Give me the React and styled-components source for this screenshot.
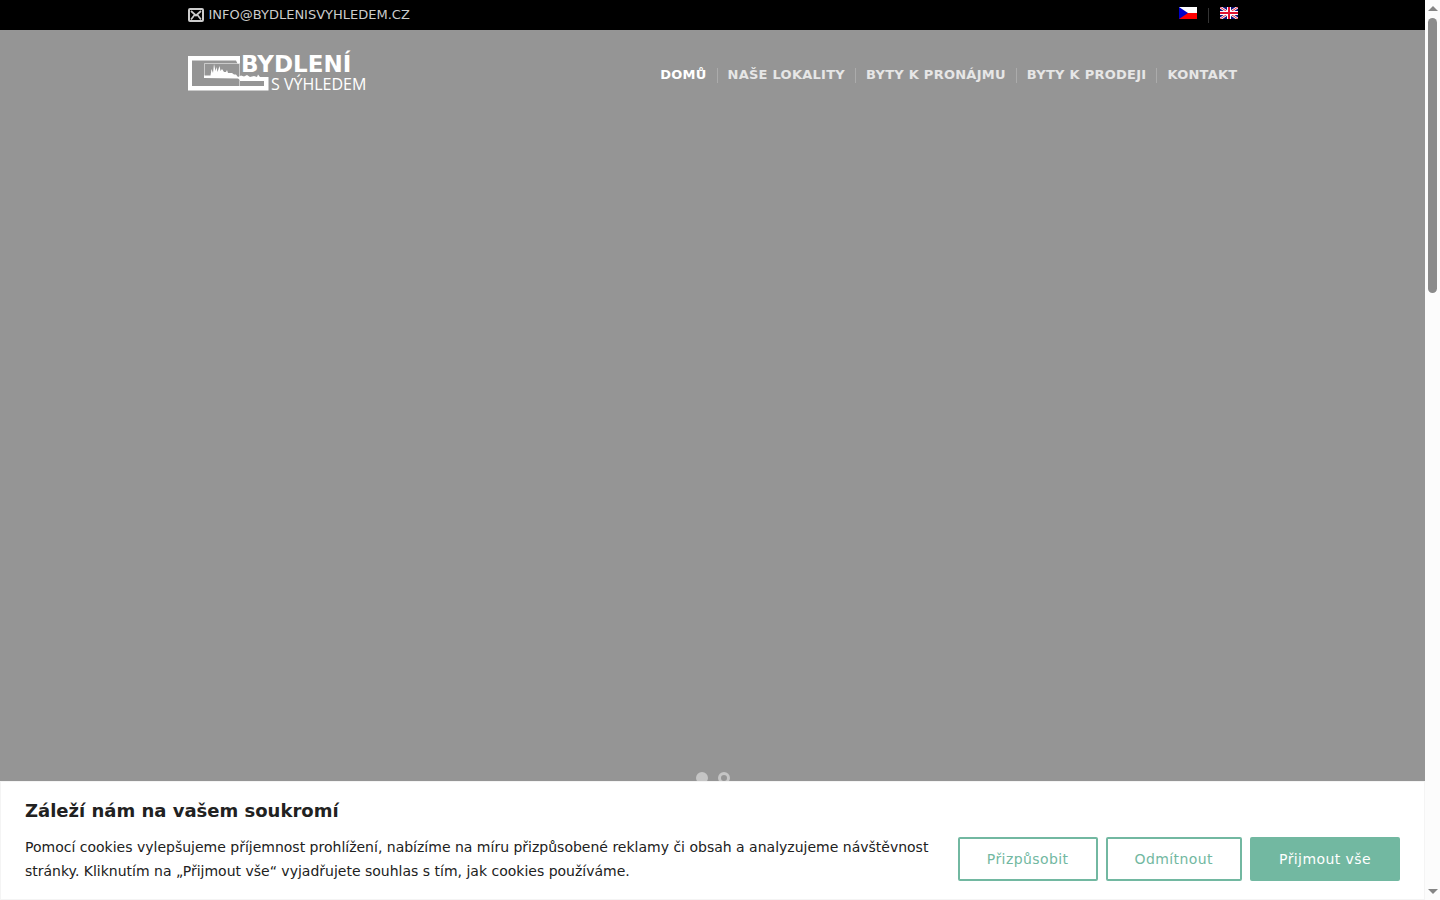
import React from "react";
import styled, { createGlobalStyle } from "styled-components";

const GlobalStyle = createGlobalStyle`
  *, *::before, *::after { box-sizing: border-box; }
  body {
    margin: 0;
    font-family: "DejaVu Sans", sans-serif;
    color: #212121;
    background: #fff;
  }
`;

const Shell = styled.div`
  display: flex;
  height: 100vh;
  overflow: hidden;
`;

const Page = styled.div`
  flex: 1;
  min-width: 0;
  display: flex;
  flex-direction: column;
  position: relative;
`;

const Container = styled.div`
  width: 100%;
  max-width: 1080px;
  margin: 0 auto;
  padding: 0 15px;
  display: flex;
  align-items: center;
  justify-content: space-between;
`;

const TopBar = styled.div`
  background: #000;
  height: 30px;
  display: flex;
`;

const MailLink = styled.a`
  display: flex;
  align-items: center;
  gap: 5px;
  height: 30px;
  font-size: 13px;
  line-height: 16px;
  color: #ccc;
  text-transform: uppercase;
  text-decoration: none;
`;

const Divided = styled.ul`
  list-style: none;
  margin: 0;
  padding: 0;
  display: flex;
  align-items: center;
`;

const DividedItem = styled.li`
  display: flex;
  align-items: center;

  & + &::before {
    content: "";
    width: 1px;
    height: 15px;
    margin: 0 ${(p) => p.$gap};
    background: ${(p) => p.$line};
  }
`;

const FlagLink = styled.a`
  display: block;
  height: 16px;

  svg { display: block; }
`;

const Hero = styled.main`
  flex: 1;
  background: #959595;
  display: flex;
  flex-direction: column;
  justify-content: space-between;
  padding-bottom: 116px;
`;

const Header = styled.header`
  height: 90px;
  display: flex;
`;

const LogoMark = styled.svg`
  overflow: visible;
`;

const NavLink = styled.a`
  font-size: 13px;
  letter-spacing: 0.02em;
  font-weight: bold;
  line-height: 16px;
  text-transform: uppercase;
  text-decoration: none;
  white-space: nowrap;
  color: ${(p) => (p.$active ? "#fff" : "#e6e6e6")};
`;

const Dots = styled.div`
  display: flex;
  justify-content: center;
  gap: 10px;
`;

const Dot = styled.button`
  width: 12px;
  height: 12px;
  padding: 0;
  border: 3px solid #c5c5c5;
  border-radius: 50%;
  background: ${(p) => (p.$active ? "#c5c5c5" : "transparent")};
`;

const CookieBar = styled.section`
  position: absolute;
  left: 0;
  right: 0;
  bottom: 0;
  padding: 16px 24px;
  background: #fff;
  border: 1px solid #f4f4f4;
`;

const CookieTitle = styled.h2`
  margin: 0 0 11px;
  font-size: 18px;
  line-height: 26px;
`;

const CookieRow = styled.div`
  display: flex;
  align-items: center;
  gap: 28px;
`;

const CookieText = styled.p`
  flex: 1;
  margin: 0;
  font-size: 14px;
  line-height: 24px;
`;

const Buttons = styled.div`
  display: flex;
  gap: 8px;
`;

const Button = styled.button`
  height: 44px;
  padding: 0 27px;
  border: 2px solid #72b8a1;
  border-radius: 2px;
  font-family: inherit;
  font-size: 14px;
  letter-spacing: 0.03em;
  white-space: nowrap;
  background: ${(p) => (p.$filled ? "#72b8a1" : "transparent")};
  color: ${(p) => (p.$filled ? "#fff" : "#72b8a1")};
`;

const ScrollRail = styled.div`
  width: 15px;
  background: #fcfcfc;
  display: flex;
  flex-direction: column;
  align-items: center;
  padding: 6px 0;
`;

const ScrollThumb = styled.div`
  width: 9px;
  height: 31%;
  margin: 7px 0 auto;
  border-radius: 5px;
  background: #8b8b8b;
`;

function Logo() {
  return (
    <LogoMark width="180" height="46" viewBox="0 0 180 46" fill="#fff" role="img" aria-label="Bydlení s výhledem">
      <path d="M0 4H52V11.500H49.500L48 8.500H4V34H76V29H52V25H80.500V38.500H0Z" />
      <path d="M16.500 25V11.500H51.500V34" fill="none" stroke="#fff" strokeOpacity=".5" />
      <path d="M16 26V23.500H22.500L23.500 17L25 21L26 12L27.500 19L28.500 15L29.500 20L31.500 14L32.500 19L34 17L36 20H38L39 18L40 21H44L46 22.500H48L50 25L53 23.500L56 24.500L59 23L62 25L66 24L69 25L70 22.500L72 25H80V28H52L50 26.500Z" />
      <text fontFamily="DejaVu Sans, sans-serif" fontWeight="bold">
        <tspan x="53" y="20" fontSize="23">BYDLENÍ</tspan>
        <tspan x="83" y="38" fontFamily="Open Sans, sans-serif" fontWeight="normal" fontSize="16">S VÝHLEDEM</tspan>
      </text>
    </LogoMark>
  );
}

function MailIcon() {
  return (
    <svg width="16" height="14" viewBox="0 0 16 14" fill="none" stroke="#ccc" aria-hidden="true">
      <rect x="1" y="1" width="14" height="12" rx="1" strokeWidth="2" />
      <path d="M3 3L8 7.500L13 3M3 11.500L6.500 7M13 11.500L9.500 7" strokeWidth="1.700" />
    </svg>
  );
}

function CzechFlag() {
  return (
    <svg width="18" height="12" viewBox="0 0 18 12" role="img" aria-label="Čeština">
      <path fill="#fff" d="M0 0H18V6H0Z" />
      <path fill="#f00" d="M0 6H18V12H0Z" />
      <path fill="#0000c8" d="M0 0L9 6L0 12Z" />
    </svg>
  );
}

function BritishFlag() {
  return (
    <svg width="18" height="12" viewBox="0 0 18 12" role="img" aria-label="English">
      <path fill="#10107c" d="M0 0H18V12H0Z" />
      <path stroke="#fff" strokeWidth="2.600" d="M0 0L18 12M18 0L0 12" />
      <path stroke="#e8203c" strokeWidth="1" d="M0 0L18 12M18 0L0 12" />
      <path stroke="#fff" strokeWidth="4" d="M9 0V12M0 6H18" />
      <path stroke="#e01030" strokeWidth="2" d="M9 0V12M0 6H18" />
    </svg>
  );
}

function Arrow({ down }) {
  return (
    <svg width="10" height="5" viewBox="0 0 10 5" fill="#858585" aria-hidden="true">
      <path d={down ? "M0 0H10L5 5Z" : "M0 5H10L5 0Z"} />
    </svg>
  );
}

const links = ["Domů", "Naše lokality", "Byty k pronájmu", "Byty k prodeji", "Kontakt"];

export default function App() {
  return (
    <Shell>
      <GlobalStyle />
      <Page>
        <TopBar>
          <Container>
            <MailLink href="mailto:info@bydlenisvyhledem.cz">
              <MailIcon />
              info@bydlenisvyhledem.cz
            </MailLink>
            <Divided>
              <DividedItem $line="#333" $gap="11px"><FlagLink href="#cs"><CzechFlag /></FlagLink></DividedItem>
              <DividedItem $line="#333" $gap="11px"><FlagLink href="#en"><BritishFlag /></FlagLink></DividedItem>
            </Divided>
          </Container>
        </TopBar>
        <Hero>
          <Header>
            <Container>
              <Logo />
              <nav>
                <Divided>
                  {links.map((label, i) => (
                    <DividedItem key={label} $line="#ababab" $gap="10px">
                      <NavLink href="#" $active={i === 0}>{label}</NavLink>
                    </DividedItem>
                  ))}
                </Divided>
              </nav>
            </Container>
          </Header>
          <Dots>
            <Dot $active aria-label="1" />
            <Dot aria-label="2" />
          </Dots>
        </Hero>
        <CookieBar>
          <CookieTitle>Záleží nám na vašem soukromí</CookieTitle>
          <CookieRow>
            <CookieText>
              Pomocí cookies vylepšujeme příjemnost prohlížení, nabízíme na míru přizpůsobené reklamy či
              obsah a analyzujeme návštěvnost stránky. Kliknutím na „Přijmout vše“ vyjadřujete souhlas s
              tím, jak cookies používáme.
            </CookieText>
            <Buttons>
              <Button>Přizpůsobit</Button>
              <Button>Odmítnout</Button>
              <Button $filled>Přijmout vše</Button>
            </Buttons>
          </CookieRow>
        </CookieBar>
      </Page>
      <ScrollRail aria-hidden="true">
        <Arrow />
        <ScrollThumb />
        <Arrow down />
      </ScrollRail>
    </Shell>
  );
}
